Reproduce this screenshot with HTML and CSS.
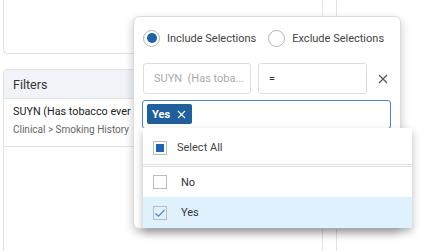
FILE: index.html
```html
<!DOCTYPE html>
<html lang="en">
<head>
  <meta charset="UTF-8">
  <title>Filter Selections</title>
  <link rel="stylesheet" href="styles.css">
</head>
<body>

<!-- Page behind the popup -->
<div class="page">
  <div class="side">
    <div class="card top-card"></div>
    <div class="card filters">
      <div class="filters-head">Filters</div>
      <div class="filter-item">
        <div class="filter-name">SUYN (Has tobacco ever</div>
        <div class="filter-path">Clinical &gt; Smoking History</div>
      </div>
    </div>
  </div>
  <div class="main"></div>
</div>

<!-- Filter popup -->
<div class="popup">
  <div class="radio-row">
    <label class="radio checked"><span class="dot"></span>Include Selections</label>
    <label class="radio"><span class="dot"></span>Exclude Selections</label>
  </div>

  <div class="cond-row">
    <div class="field field-name">SUYN&nbsp; (Has toba...</div>
    <div class="field field-op">=</div>
    <span class="remove">
      <svg width="10" height="10" viewBox="0 0 10 10"><path d="M1 1L9 9M9 1L1 9" stroke="#555" stroke-width="1.2"/></svg>
    </span>
  </div>

  <div class="tag-input">
    <span class="tag"><span class="tag-text">Yes</span>
      <svg width="9" height="9" viewBox="0 0 9 9"><path d="M1 1L8 8M8 1L1 8" stroke="#fff" stroke-width="1.1"/></svg>
    </span>
  </div>

  <!-- Options list -->
  <div class="options">
    <div class="option select-all">
      <span class="box partial"></span>Select All
    </div>
    <div class="option">
      <span class="box"></span>No
    </div>
    <div class="option selected">
      <span class="box">
        <svg width="12" height="10" viewBox="0 0 12 10"><path d="M1.5 5.5L4.5 8.2L10.5 2" fill="none" stroke="#4a86c8" stroke-width="1.2"/></svg>
      </span>Yes
    </div>
  </div>
</div>

</body>
</html>
```

FILE: styles.css
```css
/* General */
* {
  box-sizing: border-box;
}
body {
  margin: 0;
  font-family: Roboto, "Liberation Sans", sans-serif;
  font-size: 11px;
  color: #333;
  background-color: #fff;
  width: 428px;
  height: 251px;
  overflow: hidden;
  position: relative;
}

/* Background page */
.page {
  display: flex;
  height: 251px;
  padding-left: 3px;
  gap: 13px;
}
.side {
  width: 320px;
  display: flex;
  flex-direction: column;
  gap: 15px;
}
.card {
  border: 1px solid #e2e2e2;
  border-radius: 4px;
  background-color: #fff;
}
.top-card {
  height: 64px;
  margin-top: -10px;
}
.filters {
  flex: 1;
  border-bottom: none;
  border-radius: 4px 4px 0 0;
}
.filters-head {
  background-color: #f0f4f8;
  height: 29px;
  line-height: 29px;
  padding-left: 9px;
  font-size: 12.5px;
  color: #333;
  border-bottom: 1px solid #e2e2e2;
}
.filter-item {
  padding: 4px 9px 7px;
  border-bottom: 1px solid #e2e2e2;
}
.filter-name {
  white-space: nowrap;
  line-height: 18px;
  font-size: 10.8px;
  color: #222;
}
.filter-path {
  font-size: 10px;
  color: #666;
  line-height: 18px;
}
.main {
  flex: 1;
  border-left: 1px solid #e2e2e2;
}

/* Popup */
.popup {
  position: absolute;
  left: 133px;
  top: 16px;
  width: 268px;
  height: 213px;
  background-color: #fff;
  border: 1px solid #dcdcdc;
  border-radius: 6px;
  box-shadow: 0 4px 10px rgba(0, 0, 0, 0.22);
  padding: 12px 10px 0 9px;
}
.radio-row {
  display: flex;
  gap: 12px;
  height: 18px;
}
.radio {
  display: flex;
  align-items: center;
  gap: 7px;
  color: #444;
  white-space: nowrap;
}
.radio .dot {
  width: 17px;
  height: 17px;
  border: 1px solid #b4b4b4;
  border-radius: 50%;
  display: flex;
  align-items: center;
  justify-content: center;
}
.radio.checked .dot::after {
  content: "";
  width: 10px;
  height: 10px;
  border-radius: 50%;
  background-color: #1e64a8;
}

.cond-row {
  display: flex;
  align-items: center;
  margin-top: 16px;
  height: 31px;
}
.field {
  height: 31px;
  line-height: 29px;
  border: 1px solid #dedede;
  border-radius: 3px;
  padding-left: 10px;
  white-space: nowrap;
}
.field-name {
  width: 108px;
  color: #aaa;
}
.field-op {
  width: 109px;
  margin-left: 7px;
  color: #333;
}
.remove {
  margin-left: 11px;
  display: flex;
}

.tag-input {
  margin-top: 6px;
  margin-left: -1px;
  width: 249px;
  height: 29px;
  border: 1px solid #4a86c8;
  border-radius: 3px;
  padding: 3px 4px;
}
.tag {
  display: inline-flex;
  align-items: center;
  gap: 7px;
  height: 20px;
  padding: 0 6px 0 5px;
  background-color: #1f5f9e;
  color: #fff;
  font-weight: bold;
  border-radius: 2px;
}

/* Options list */
.options {
  position: absolute;
  left: 9px;
  top: 111px;
  width: 269px;
  background-color: #fff;
  box-shadow: 0 4px 8px rgba(0, 0, 0, 0.28);
}
.option {
  display: flex;
  align-items: center;
  height: 30px;
  padding-left: 10px;
  color: #333;
}
.option .box {
  width: 14px;
  height: 14px;
  border: 1px solid #bbb;
  margin-right: 14px;
  display: flex;
  align-items: center;
  justify-content: center;
}
.select-all {
  height: 38px;
  margin-top: 1px;
  padding-top: 2px;
  border-bottom: 3px double #e0e0e0;
  color: #444;
}
.select-all .box {
  margin-right: 10px;
}
.box.partial::after {
  content: "";
  width: 8px;
  height: 8px;
  background-color: #1e64a8;
}
.option.selected {
  background-color: #dff1fd;
  height: 31px;
}
```
